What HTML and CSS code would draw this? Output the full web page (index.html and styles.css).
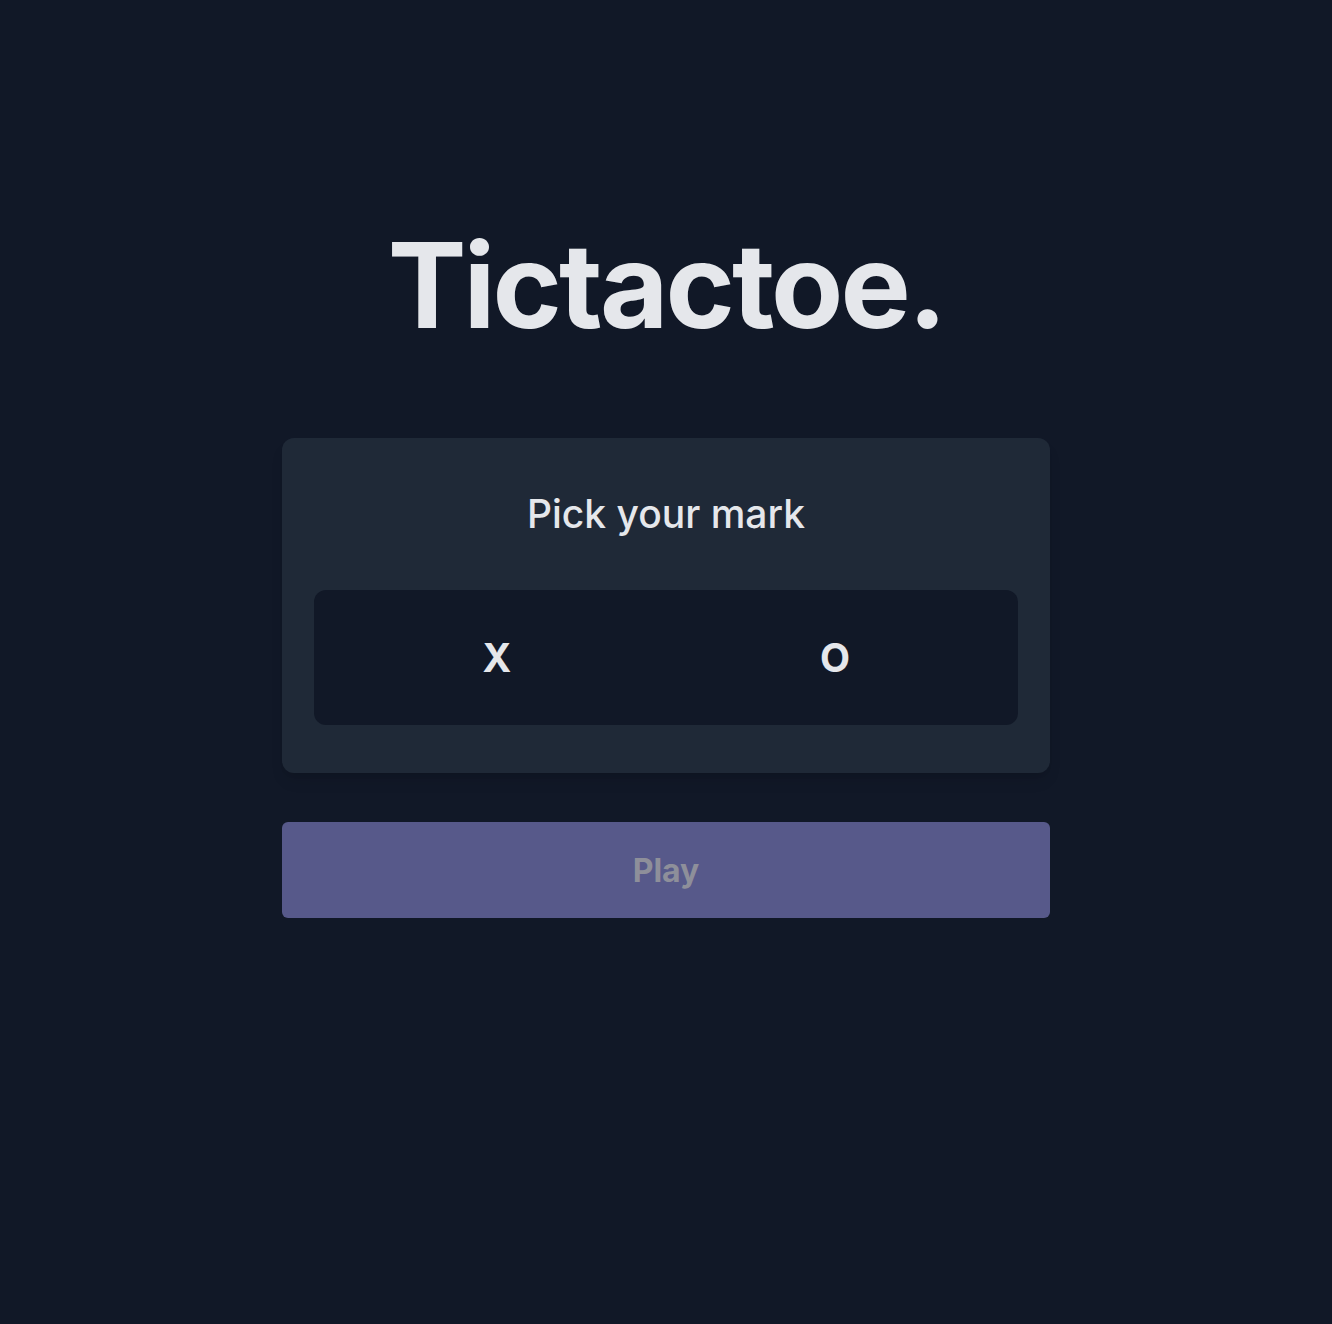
FILE: index.html
```html
<!DOCTYPE html>
<html lang="en">
<head>
<meta charset="utf-8">
<title>Tictactoe</title>
<link rel="stylesheet" href="styles.css">
</head>
<body>
<main class="page">
  <h1 class="title">Tictactoe.</h1>
  <section class="card">
    <h2 class="card-title">Pick your mark</h2>
    <div class="marks">
      <button class="mark">X</button>
      <button class="mark">O</button>
    </div>
  </section>
  <button class="play" disabled>Play</button>
</main>
</body>
</html>
```
FILE: styles.css
```css
html, body {
  margin: 0;
  padding: 0;
  background: #111827;
  min-height: 100%;
}
body {
  font-family: Inter, "Noto Sans", sans-serif;
  color: #e5e7eb;
}
.page {
  display: flex;
  flex-direction: column;
  align-items: center;
  padding-top: 225px;
}
.title {
  margin: 0 0 93px;
  font-size: 118px;
  line-height: 120px;
  font-weight: 700;
  letter-spacing: -0.025em;
  color: #e5e7eb;
}
.card {
  box-sizing: border-box;
  width: 768px;
  background: #1f2937;
  border-radius: 12px;
  padding: 56px 32px 48px;
  box-shadow: 0 10px 15px -3px rgba(0,0,0,0.1), 0 4px 6px -4px rgba(0,0,0,0.1);
}
.card-title {
  margin: 0 0 56px;
  text-align: center;
  font-size: 39px;
  line-height: 40px;
  font-weight: 500;
  color: #e5e7eb;
}
.marks {
  display: grid;
  grid-template-columns: 1fr 1fr;
  gap: 4px;
  padding: 0 16px;
  height: 135px;
  background: #111827;
  border-radius: 12px;
}
.mark {
  background: transparent;
  border: none;
  color: #e5e7eb;
  font-family: Inter, "Noto Sans", sans-serif;
  font-size: 39px;
  font-weight: 700;
  cursor: pointer;
}
.play {
  box-sizing: border-box;
  margin-top: 49px;
  width: 768px;
  height: 96px;
  border: none;
  border-radius: 6px;
  background: #57598a;
  color: #8e8f9a;
  font-family: Inter, "Noto Sans", sans-serif;
  font-size: 32px;
  font-weight: 700;
}
```
